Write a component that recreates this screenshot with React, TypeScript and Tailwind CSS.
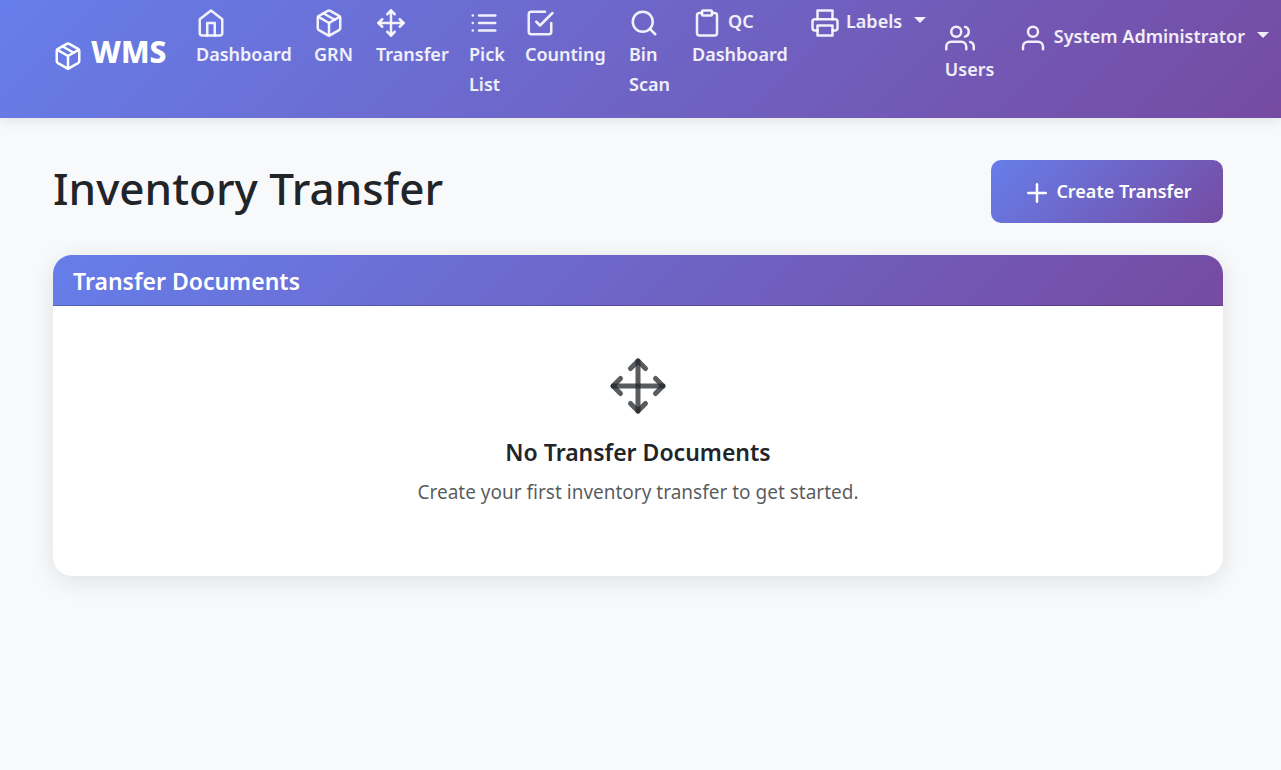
import type { ReactNode } from "react";
import clsx from "clsx";
import {
  FiCheckSquare,
  FiClipboard,
  FiHome,
  FiList,
  FiMove,
  FiPackage,
  FiPlus,
  FiPrinter,
  FiSearch,
  FiUser,
  FiUsers,
} from "react-icons/fi";
import type { IconType } from "react-icons";

const Caret = () => (
  <span
    aria-hidden="true"
    className="h-0 w-0 border-x-[6px] border-t-[6px] border-x-transparent border-t-current"
  />
);

type Item = { label: string[]; icon: IconType; width: string; beside?: string };

const items: Item[] = [
  { label: ["Dashboard"], icon: FiHome, width: "w-[98px]" },
  { label: ["GRN"], icon: FiPackage, width: "w-[42px]" },
  { label: ["Transfer"], icon: FiMove, width: "w-[73px]" },
  { label: ["Pick", "List"], icon: FiList, width: "w-[36px]" },
  { label: ["Counting"], icon: FiCheckSquare, width: "w-[84px]" },
  { label: ["Bin", "Scan"], icon: FiSearch, width: "w-[43px]" },
  { label: ["Dashboard"], icon: FiClipboard, width: "w-[98px]", beside: "QC" },
];

function NavLink({ label, icon: Icon, width, beside }: Item) {
  return (
    <a href="#" className={clsx("block shrink-0 whitespace-nowrap", width)}>
      <span className="flex h-[31px] gap-1.5">
        <Icon className="size-[30px] shrink-0" />
        {beside && <span className="leading-[26px]">{beside}</span>}
      </span>
      {label.map((line) => (
        <span key={line} className="block leading-[30px]">
          {line}
        </span>
      ))}
    </a>
  );
}

function MenuButton({ icon: Icon, children }: { icon: IconType; children: ReactNode }) {
  return (
    <button type="button" className="flex items-start whitespace-nowrap">
      <Icon className="size-[30px] shrink-0" />
      <span className="ml-1.5 leading-[26px]">{children}</span>
      <span className="ml-3 flex h-6 items-center">
        <Caret />
      </span>
    </button>
  );
}

export default function App() {
  return (
    <div className="min-h-screen bg-[#f8f9fb] font-['Noto_Sans',sans-serif] text-[#212529]">
      <nav className="flex h-[118px] items-start bg-[linear-gradient(135deg,#667eea_0%,#764ba2_100%)] pr-3 pl-[53px] text-[18px] font-semibold text-white/90 shadow-[0_2px_12px_rgba(0,0,0,0.1)]">
        <a href="#" className="mr-[29px] flex w-[114px] shrink-0 gap-2 pt-[38px] text-white">
          <FiPackage className="mt-[3px] size-[30px] shrink-0" />
          <span className="text-[30px] leading-[28px] font-extrabold">WMS</span>
        </a>
        <div className="flex flex-1 gap-5 pt-2">
          {items.map((item) => (
            <NavLink key={item.label.join() + (item.beside ?? "")} {...item} />
          ))}
          <MenuButton icon={FiPrinter}>Labels</MenuButton>
        </div>
        <div className="flex gap-6 pt-[23px]">
          <NavLink label={["Users"]} icon={FiUsers} width="w-[49px]" />
          <MenuButton icon={FiUser}>System Administrator</MenuButton>
        </div>
      </nav>

      <main className="pt-[42px] pr-[58px] pl-[53px]">
        <div className="mb-8 flex items-start justify-between">
          <h1 className="text-[44px] leading-[56px] font-medium">Inventory Transfer</h1>
          <button
            type="button"
            className="flex h-[63px] w-[232px] items-center justify-center gap-1 rounded-[10px] bg-[linear-gradient(135deg,#667eea_0%,#764ba2_100%)] text-[18px] font-semibold text-white"
          >
            <FiPlus className="mt-0.5 size-[30px]" />
            Create Transfer
          </button>
        </div>

        <section className="overflow-hidden rounded-[19px] bg-white shadow-[0_5px_25px_rgba(0,0,0,0.1)]">
          <h2 className="h-[51px] border-b border-black/20 bg-[linear-gradient(135deg,#667eea_0%,#764ba2_100%)] bg-origin-border px-5 pt-2.5 text-[23px] leading-[32px] font-semibold text-white">
            Transfer Documents
          </h2>
          <div className="flex h-[270px] flex-col items-center pt-[50px] text-center">
            <FiMove className="size-[60px] text-[#212529]/75" />
            <h3 className="mt-5 text-[23px] leading-[32px] font-semibold">No Transfer Documents</h3>
            <p className="mt-2 text-[19px] leading-[32px] text-[#212529]/75">
              Create your first inventory transfer to get started.
            </p>
          </div>
        </section>
      </main>
    </div>
  );
}
